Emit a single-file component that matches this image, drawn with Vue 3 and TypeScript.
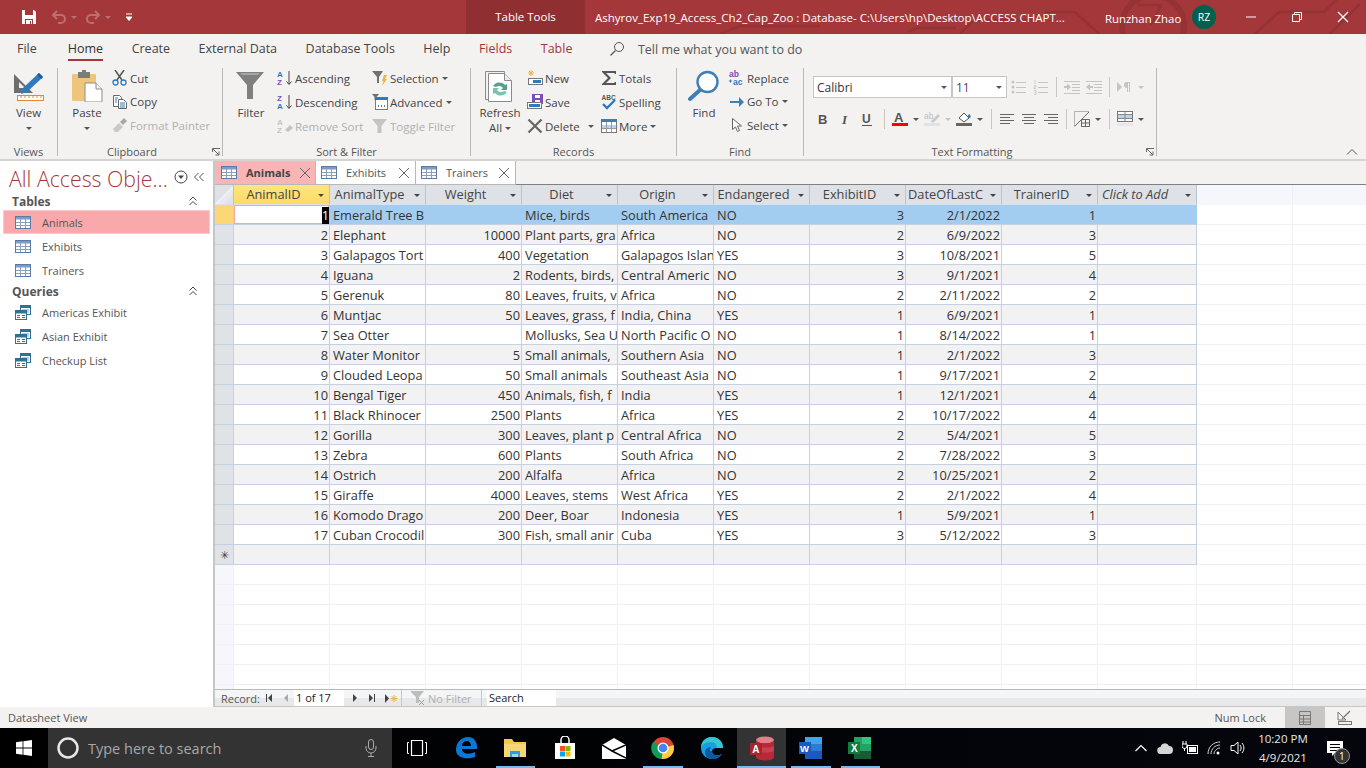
<template>
  <div class="app">
    <!-- icon sprite -->
    <svg class="sprite" width="0" height="0">
      <defs>
        <symbol id="save" viewBox="0 0 16 16"><path d="M1 1h12l2 2v12H1z" fill="#fff"/><path d="M4 1h8v5H4z" fill="#a4373a"/><path d="M4 10h8v5H4z" fill="#a4373a"/><path d="M5 11h6v4H5z" fill="#fff"/><path d="M9 12h1v3H9z" fill="#a4373a"/></symbol>
        <symbol id="undo" viewBox="0 0 16 16"><path d="M6 2 2 6l4 4M2 6h8a4 4 0 0 1 0 8H7" fill="none" stroke="#bd6e70" stroke-width="2"/></symbol>
        <symbol id="redo" viewBox="0 0 16 16"><path d="M10 2l4 4-4 4M14 6H6a4 4 0 0 0 0 8h3" fill="none" stroke="#bd6e70" stroke-width="2"/></symbol>
        <symbol id="view" viewBox="0 0 32 32"><path d="M1 4v19h19z" fill="#6e6e6e"/><path d="M6 12v6h6z" fill="#f3f2f1"/><path d="M10 18 26 3l4 4-16 15-6 2z" fill="#2f7abf"/><path d="M26 3l4 4-2 2-4-4z" fill="#1d5d97"/><rect x="4.500" y="25.500" width="26" height="5" fill="#fff" stroke="#e8872c"/><path d="M8 26v2M12 26v2M16 26v2M20 26v2M24 26v2M28 26v2" stroke="#e8872c"/></symbol>
        <symbol id="paste" viewBox="0 0 32 32"><rect x="1" y="4" width="24" height="27" rx="1" fill="#efc57c"/><rect x="7" y="2" width="12" height="6" fill="#7b7b7b"/><rect x="11" y="0" width="4" height="3" fill="#7b7b7b"/><path d="M14 13h11l6 6v13H14z" fill="#fff" stroke="#8c8c8c"/><path d="M25 13v6h6" fill="#f0f0f0" stroke="#8c8c8c"/></symbol>
        <symbol id="cut" viewBox="0 0 16 16"><path d="M3 0l7 10M12 0 5 10" stroke="#555" stroke-width="1.500" fill="none"/><circle cx="3.500" cy="12.500" r="2.500" fill="none" stroke="#2f7abf" stroke-width="1.300"/><circle cx="11.500" cy="12.500" r="2.500" fill="none" stroke="#2f7abf" stroke-width="1.300"/></symbol>
        <symbol id="copy" viewBox="0 0 16 16"><path d="M1.500 1.500h6l2 2v9h-8z" fill="#fff" stroke="#666"/><path d="M6.500 5.500h5l3 3v6h-8z" fill="#fff" stroke="#666"/><path d="M8 9h5M8 11h5M8 13h5M3 4h3M3 6h2M3 8h2" stroke="#2f7abf"/></symbol>
        <symbol id="painter" viewBox="0 0 16 16"><path d="M1 12l6-6 4 4-5 5H3z" fill="#c9c9c9"/><path d="M8 5l4-4 3 3-4 4z" fill="#a8a8a8"/></symbol>
        <symbol id="funnel" viewBox="0 0 32 32"><path d="M1 2h28L18 15v14h-6V15z" fill="#7f7f7f"/><path d="M5 3h20l-2 2H7z" fill="#a6a6a6"/></symbol>
        <symbol id="asc" viewBox="0 0 16 16"><text x="0" y="7" font-size="8" font-weight="700" fill="#2f7abf" font-family="Liberation Sans">A</text><text x="0" y="15" font-size="8" font-weight="700" fill="#7d4fb5" font-family="Liberation Sans">Z</text><path d="M12 1v13M9.500 11.500 12 14.500l2.500-3" stroke="#444" fill="none"/></symbol>
        <symbol id="desc" viewBox="0 0 16 16"><text x="0" y="7" font-size="8" font-weight="700" fill="#7d4fb5" font-family="Liberation Sans">Z</text><text x="0" y="15" font-size="8" font-weight="700" fill="#2f7abf" font-family="Liberation Sans">A</text><path d="M12 1v13M9.500 11.500 12 14.500l2.500-3" stroke="#444" fill="none"/></symbol>
        <symbol id="nosort" viewBox="0 0 16 16"><text x="0" y="7" font-size="8" font-weight="700" fill="#c4c4c4" font-family="Liberation Sans">A</text><text x="0" y="15" font-size="8" font-weight="700" fill="#c4c4c4" font-family="Liberation Sans">Z</text><path d="M8 12l5-5 3 3-5 4z" fill="#c4c4c4"/></symbol>
        <symbol id="selection" viewBox="0 0 16 16"><path d="M0 1h11L7 7v6H5V7z" fill="#707070"/><path d="M12 5h3l-2 4h2l-5 7 1.500-5H10z" fill="#f0b33c"/></symbol>
        <symbol id="advanced" viewBox="0 0 16 16"><path d="M0 0h7L4.500 3v3h-2V3z" fill="#707070"/><rect x="3.500" y="3.500" width="12" height="12" fill="#fff" stroke="#7b7b7b"/><rect x="3" y="3" width="13" height="3" fill="#2f7abf"/><path d="M6 12h1M9 12h1M12 12h1" stroke="#444" stroke-width="1.500"/></symbol>
        <symbol id="togglef" viewBox="0 0 16 16"><path d="M0 1h15L9.500 8v7h-4V8z" fill="#c4c4c4"/></symbol>
        <symbol id="refresh" viewBox="0 0 32 32"><path d="M1.500 1.500h19v28h-19z" fill="#f3f2f1" stroke="#8a8a8a"/><path d="M4.500 3.500h16l7 7v21h-23z" fill="#fff" stroke="#8a8a8a"/><path d="M20.500 3.500v7h7" fill="#ececec" stroke="#8a8a8a"/><path d="M9 16a7 6 0 0 1 12-1l2-1v6h-6l2-2a4.500 4 0 0 0-7-1z" fill="#58a08a"/><path d="M23 22a7 6 0 0 1-12 1l-2 1v-6h6l-2 2a4.500 4 0 0 0 7 1z" fill="#7dc2ae"/></symbol>
        <symbol id="new" viewBox="0 0 16 16"><path d="M4 0v6M1 3h6M2 1l4 4M6 1 2 5" stroke="#e9b44c"/><rect x="1.500" y="8.500" width="14" height="6" fill="#fff" stroke="#777"/><rect x="6" y="10" width="8" height="3" fill="#2f7abf"/></symbol>
        <symbol id="saverec" viewBox="0 0 16 16"><rect x="5" y="0" width="11" height="10" fill="#7d4fb5"/><rect x="8" y="1" width="5" height="3" fill="#fff"/><rect x="8" y="6" width="5" height="4" fill="#fff"/><rect x="0.500" y="8.500" width="14" height="6" fill="#fff" stroke="#777"/><rect x="2" y="10" width="11" height="3" fill="#2f7abf"/></symbol>
        <symbol id="delete" viewBox="0 0 16 16"><path d="M1.500 1.500l13 13M14.500 1.500l-13 13" stroke="#666" stroke-width="2.200"/></symbol>
        <symbol id="totals" viewBox="0 0 16 16"><path d="M1 1h14v3h-1l-1-1H5l5 5-5 5h8l1-1h1v3H1v-1l6-6-6-6z" fill="#555"/></symbol>
        <symbol id="spelling" viewBox="0 0 16 16"><text x="0.500" y="6" font-size="6.500" font-weight="700" fill="#555" font-family="Liberation Sans">ABC</text><path d="M2 10l4 4 8-8" stroke="#2f7abf" stroke-width="2.400" fill="none"/></symbol>
        <symbol id="more" viewBox="0 0 16 16"><rect x="0.500" y="1.500" width="15" height="13" fill="#fff" stroke="#777"/><rect x="0" y="1" width="16" height="3" fill="#4a7ba8"/><rect x="1" y="7" width="14" height="3" fill="#b8d3ea"/><path d="M5.500 4v10M10.500 4v10M1 10.500h14" stroke="#999"/></symbol>
        <symbol id="find" viewBox="0 0 32 32"><circle cx="19.500" cy="12" r="10" fill="#fff" stroke="#3f7fb5" stroke-width="2.400"/><path d="M12 20 2 29" stroke="#3f7fb5" stroke-width="4" stroke-linecap="round"/></symbol>
        <symbol id="replace" viewBox="0 0 16 16"><text x="0" y="7" font-size="8.500" font-weight="700" fill="#7d4fb5" font-family="Liberation Sans">ab</text><text x="4" y="15" font-size="8.500" font-weight="700" fill="#2f7abf" font-family="Liberation Sans">ac</text><path d="M0 11h3M1.500 9.500v3" stroke="#2f7abf"/></symbol>
        <symbol id="goto" viewBox="0 0 16 16"><path d="M1 7h9V3l5 5-5 5V9H1z" fill="#3f7fb5"/></symbol>
        <symbol id="select" viewBox="0 0 16 16"><path d="M3.500 1.500v11l3-2.500 2 4.500 2-1-2-4.500h4z" fill="#fff" stroke="#666"/></symbol>
        <symbol id="bold" viewBox="0 0 16 16"><text x="3" y="13" font-size="13" font-weight="700" fill="#555" font-family="Liberation Sans">B</text></symbol>
        <symbol id="italic" viewBox="0 0 16 16"><text x="5" y="13" font-size="13" font-style="italic" font-weight="700" fill="#555" font-family="Liberation Serif">I</text></symbol>
        <symbol id="under" viewBox="0 0 16 16"><text x="3" y="12" font-size="12" font-weight="700" fill="#555" font-family="Liberation Sans">U</text><path d="M3 14.500h10" stroke="#555"/></symbol>
        <symbol id="fcolor" viewBox="0 0 16 16"><text x="2" y="11" font-size="13" font-weight="700" fill="#555" font-family="Liberation Sans">A</text><rect x="0" y="12" width="16" height="3" fill="#f00"/></symbol>
        <symbol id="hilite" viewBox="0 0 16 16"><text x="0" y="8" font-size="8.500" fill="#bdbdbd" font-family="Liberation Sans">ab</text><path d="M7 10l7-7 2 2-7 7z" fill="#c9c9c9"/><rect x="0" y="12" width="16" height="3" fill="#e4e1e8"/></symbol>
        <symbol id="fill" viewBox="0 0 16 16"><path d="M3 7l5-5 5 5-5 4z" fill="#fff" stroke="#555"/><path d="M13 3c2 1 2 3 1 4l-3-1z" fill="#2f7abf"/><rect x="0" y="12" width="16" height="3" fill="#666"/></symbol>
        <symbol id="left" viewBox="0 0 16 16"><path d="M1 3.500h14M1 6.500h10M1 9.500h14M1 12.500h10" stroke="#666"/></symbol>
        <symbol id="center" viewBox="0 0 16 16"><path d="M1 3.500h14M3 6.500h10M1 9.500h14M3 12.500h10" stroke="#666"/></symbol>
        <symbol id="right" viewBox="0 0 16 16"><path d="M1 3.500h14M5 6.500h10M1 9.500h14M5 12.500h10" stroke="#666"/></symbol>
        <symbol id="gridl" viewBox="0 0 16 16"><path d="M.5 15.500V.5h15" fill="none" stroke="#777" stroke-dasharray="1 1"/><path d="M1 15 15 1" stroke="#666"/><path d="M7.500 15.500v-7h8v7zM11.500 8.500v7M7.500 12h8" fill="none" stroke="#666"/></symbol>
        <symbol id="altrow" viewBox="0 0 16 16"><rect x="0.500" y="0.500" width="15" height="10" fill="#fff" stroke="#777"/><rect x="1" y="4" width="14" height="3" fill="#b8d3ea"/><path d="M8 1v9M1 3.500h14M1 7.500h14" stroke="#888"/><rect x="0" y="12" width="16" height="3" fill="#e8e8ec"/></symbol>
        <symbol id="bullets" viewBox="0 0 16 16"><path d="M5 3.500h10M5 8.500h10M5 13.500h10" stroke="#c4c4c4"/><circle cx="2" cy="3" r="1.500" fill="#c4c4c4"/><circle cx="2" cy="8" r="1.500" fill="#c4c4c4"/><circle cx="2" cy="13" r="1.500" fill="#c4c4c4"/></symbol>
        <symbol id="numbers" viewBox="0 0 16 16"><path d="M5 3.500h10M5 8.500h10M5 13.500h10" stroke="#c4c4c4"/><path d="M2 1v4M1 6.500h2v1.500H1v1.500h2M1 11.500h2v4H1M1.500 13.500H3" stroke="#c4c4c4" fill="none" stroke-width=".8"/></symbol>
        <symbol id="indent" viewBox="0 0 16 16"><path d="M0 2.500h16M8 5.500h8M8 8.500h8M8 11.500h8M0 14.500h16" stroke="#c4c4c4"/><path d="M0 7h3V4.500L7 8l-4 3.500V9H0z" fill="#c4c4c4"/></symbol>
        <symbol id="outdent" viewBox="0 0 16 16"><path d="M0 2.500h16M8 5.500h8M8 8.500h8M8 11.500h8M0 14.500h16" stroke="#c4c4c4"/><path d="M7 7H4V4.500L0 8l4 3.500V9h3z" fill="#c4c4c4"/></symbol>
        <symbol id="rtl" viewBox="0 0 16 16"><path d="M0 3l5 5-5 5z" fill="#c4c4c4"/><path d="M10 3a2.500 2.500 0 0 0 0 6v4h1V4h1v9h1V3z" fill="#c4c4c4"/></symbol>
        <symbol id="launcher" viewBox="0 0 8 8"><path d="M.5 4V.5H8M1 1l6 6M7 3.500V7H3.500" stroke="#666" fill="none"/></symbol>
        <symbol id="tbl" viewBox="0 0 16 13"><rect x="0.500" y="0.500" width="15" height="12" fill="#fff" stroke="#5b7ba4"/><rect x="1" y="1" width="14" height="2.500" fill="#7f9cc4"/><path d="M1 6.500h14M1 9.500h14M5.500 3v9M10.500 3v9" stroke="#8aa0bf"/></symbol>
        <symbol id="qry" viewBox="0 0 16 15"><rect x="5.500" y="0.500" width="10" height="9" fill="#fff" stroke="#31708f"/><rect x="6" y="1" width="9" height="2" fill="#31708f"/><path d="M7 5h7M7 7h7" stroke="#7f9cc4"/><rect x="0.500" y="5.500" width="11" height="9" fill="#fff" stroke="#31708f"/><rect x="1" y="6" width="10" height="2.500" fill="#31708f"/><path d="M2 10.500h3M7 10.500h3M2 12.500h3M7 12.500h3" stroke="#31708f"/></symbol>
      </defs>
    </svg>

    <!-- title bar -->
    <header class="title">
      <svg class="circuit" width="1366" height="34" viewBox="0 0 1366 34">
        <g fill="none" stroke="#943236" stroke-width="2.500">
          <circle cx="1153" cy="26" r="31" stroke-width="6"/>
          <path d="M1137 5h24l-10 20M1045 12h30l24 22M960 34l14-14h60M1255 34l24-22h45l14-14M1330 34l30-30" />
          <path d="M908 32l8-4h40M720 34l20-8h80" />
        </g>
      </svg>
      <div class="qat">
        <svg width="16" height="16"><use href="#save"/></svg>
        <svg class="q-undo" width="16" height="16"><use href="#undo"/></svg>
        <i class="qcaret"></i>
        <svg class="q-redo" width="16" height="16"><use href="#redo"/></svg>
        <i class="qcaret"></i>
        <svg class="qmenu" width="8" height="8" viewBox="0 0 8 8"><path d="M1 1h6M1 4h6L4 7.500z" stroke="#fff" fill="#fff"/></svg>
      </div>
      <div class="tools">Table Tools</div>
      <div class="doc-title">Ashyrov_Exp19_Access_Ch2_Cap_Zoo : Database- C:\Users\hp\Desktop\ACCESS CHAPT...</div>
      <div class="user">Runzhan Zhao</div>
      <div class="avatar">RZ</div>
      <svg class="winbtn first" width="46" height="34" viewBox="0 0 46 34"><path d="M18 17h10" stroke="#fff"/></svg>
      <svg class="winbtn" width="46" height="34" viewBox="0 0 46 34"><path d="M18.500 14.500h7v7h-7zM20.500 14.500v-2h7v7h-2" fill="none" stroke="#fff"/></svg>
      <svg class="winbtn" width="46" height="34" viewBox="0 0 46 34"><path d="M18 12l10 10M28 12 18 22" stroke="#fff" stroke-width="1.200"/></svg>
    </header>

    <!-- ribbon tabs -->
    <nav class="tabs">
      <span v-for="t in ribbonTabs" :key="t.label" class="tab" :class="t.cls">{{ t.label }}</span>
      <svg class="tell-i" width="16" height="16" viewBox="0 0 16 16"><circle cx="10" cy="6" r="4.500" fill="none" stroke="#555"/><path d="M6.500 9.500 1.500 14.500" stroke="#555" stroke-width="1.300"/></svg>
      <span class="tell">Tell me what you want to do</span>
    </nav>

    <!-- ribbon -->
    <section class="ribbon">
      <div class="group g-views">
        <div class="gbody">
          <div class="large view-btn">
            <svg width="32" height="32"><use href="#view"/></svg>
            <span>View</span>
            <i class="caret"></i>
          </div>
        </div>
        <div class="glabel">Views</div>
      </div>

      <div class="group g-clip">
        <div class="gbody">
          <div class="large paste-btn">
            <svg width="32" height="32"><use href="#paste"/></svg>
            <span>Paste</span>
            <i class="caret"></i>
          </div>
          <div class="col tight">
            <div v-for="b in clipboard" :key="b.label" class="sm" :class="{ off: b.off }">
              <svg width="16" height="16"><use :href="'#' + b.icon"/></svg>{{ b.label }}
            </div>
          </div>
        </div>
        <div class="glabel">Clipboard<svg class="launch" width="8" height="8"><use href="#launcher"/></svg></div>
      </div>

      <div class="group g-sort">
        <div class="gbody">
          <div class="large filter-btn">
            <svg width="32" height="32"><use href="#funnel"/></svg>
            <span>Filter</span>
          </div>
          <div class="col sort-a">
            <div v-for="b in sortA" :key="b.label" class="sm" :class="{ off: b.off }">
              <svg width="16" height="16"><use :href="'#' + b.icon"/></svg>{{ b.label }}
            </div>
          </div>
          <div class="col">
            <div v-for="b in sortB" :key="b.label" class="sm" :class="{ off: b.off }">
              <svg width="16" height="16"><use :href="'#' + b.icon"/></svg>{{ b.label }}<i v-if="b.caret" class="caret"></i>
            </div>
          </div>
        </div>
        <div class="glabel">Sort &amp; Filter</div>
      </div>

      <div class="group g-rec">
        <div class="gbody">
          <div class="large refresh-btn">
            <svg width="32" height="32"><use href="#refresh"/></svg>
            <span>Refresh</span>
            <span class="all">All<i class="caret"></i></span>
          </div>
          <div class="col rec-a">
            <div v-for="b in recA" :key="b.label" class="sm">
              <svg width="16" height="16"><use :href="'#' + b.icon"/></svg>{{ b.label }}<i v-if="b.caret" class="caret far"></i>
            </div>
          </div>
          <div class="col">
            <div v-for="b in recB" :key="b.label" class="sm">
              <svg width="16" height="16"><use :href="'#' + b.icon"/></svg>{{ b.label }}<i v-if="b.caret" class="caret"></i>
            </div>
          </div>
        </div>
        <div class="glabel">Records</div>
      </div>

      <div class="group g-find">
        <div class="gbody">
          <div class="large find-btn">
            <svg width="32" height="32"><use href="#find"/></svg>
            <span>Find</span>
          </div>
          <div class="col tight">
            <div v-for="b in findBtns" :key="b.label" class="sm">
              <svg width="16" height="16"><use :href="'#' + b.icon"/></svg>{{ b.label }}<i v-if="b.caret" class="caret"></i>
            </div>
          </div>
        </div>
        <div class="glabel">Find</div>
      </div>

      <div class="group g-text">
        <div class="gbody stack">
          <div class="fmt-row">
            <div class="combo font">Calibri<i class="caret"></i></div>
            <div class="combo size"><span class="size-val">11</span><i class="caret"></i></div>
            <template v-for="(it, n) in fmtTop" :key="n">
              <i v-if="it.kind === 'sep'" class="vsep"></i>
              <i v-else-if="it.kind === 'caret'" class="fcaret"><i class="caret dim"></i></i>
              <svg v-else class="fi" width="16" height="16"><use :href="'#' + it.kind"/></svg>
            </template>
          </div>
          <div class="fmt-row second">
            <template v-for="(it, n) in fmtBottom" :key="n">
              <i v-if="it.kind === 'sep'" class="vsep" :class="it.cls"></i>
              <i v-else-if="it.kind === 'caret'" class="fcaret"><i class="caret" :class="it.cls"></i></i>
              <svg v-else class="fi" width="16" height="16"><use :href="'#' + it.kind"/></svg>
            </template>
          </div>
        </div>
        <div class="glabel">Text Formatting<svg class="launch" width="8" height="8"><use href="#launcher"/></svg></div>
      </div>

      <svg class="collapse" width="12" height="8" viewBox="0 0 12 8"><path d="M1 6.500 6 1.500l5 5" fill="none" stroke="#555"/></svg>
    </section>

    <!-- main -->
    <main class="main">
      <aside class="navpane">
        <div class="nav-head">
          <span class="nav-title">All Access Obje...</span>
          <svg width="14" height="14" viewBox="0 0 14 14"><circle cx="7" cy="7" r="6" fill="none" stroke="#444"/><path d="M4 5.500h6L7 9z" fill="#444"/></svg>
          <svg width="12" height="10" viewBox="0 0 12 10"><path d="M5.500 1 1.500 5l4 4M10.500 1l-4 4 4 4" fill="none" stroke="#555"/></svg>
        </div>
        <template v-for="sec in navSections" :key="sec.title">
          <div class="nav-sec">
            {{ sec.title }}
            <svg width="10" height="10" viewBox="0 0 10 10"><path d="M1.500 4.500 5 1l3.500 3.500M1.500 9 5 5.500 8.500 9" fill="none" stroke="#444"/></svg>
          </div>
          <div v-for="item in sec.items" :key="item" class="nav-item" :class="{ active: item === 'Animals' }">
            <svg width="16" height="15"><use :href="'#' + sec.icon"/></svg>
            <span>{{ item }}</span>
          </div>
        </template>
      </aside>

      <div class="content">
        <div class="doc-tabs">
          <div v-for="d in docTabs" :key="d" class="doc-tab" :class="{ active: d === 'Animals' }">
            <svg width="16" height="13"><use href="#tbl"/></svg>
            <span>{{ d }}</span>
            <svg class="doc-x" width="12" height="12" viewBox="0 0 12 12"><path d="M1 1l10 10M11 1 1 11" stroke="#666"/></svg>
          </div>
        </div>

        <div class="sheet">
          <table>
            <colgroup>
              <col class="c-sel"/>
              <col v-for="n in 9" :key="n" class="c-std"/>
              <col class="c-add"/>
              <col class="c-std"/>
              <col class="c-std"/>
            </colgroup>
            <thead>
              <tr>
                <th class="sel corner"></th>
                <th v-for="h in headers" :key="h" :class="{ hot: h === 'AnimalID' }">
                  <span class="th-text">{{ h }}</span><i class="hcaret"></i>
                </th>
                <th class="add"><span>Click to Add</span><i class="hcaret"></i></th>
                <th class="blank"></th>
                <th class="blank"></th>
              </tr>
            </thead>
            <tbody>
              <tr v-for="(r, i) in animals" :key="r[0]" :class="{ cur: i === 0, alt: i % 2 === 1 }">
                <td class="sel"></td>
                <td class="num id"><span :class="{ mark: i === 0 }">{{ r[0] }}</span></td>
                <td>{{ r[1] }}</td>
                <td class="num">{{ r[2] }}</td>
                <td>{{ r[3] }}</td>
                <td>{{ r[4] }}</td>
                <td>{{ r[5] }}</td>
                <td class="num">{{ r[6] }}</td>
                <td class="num">{{ r[7] }}</td>
                <td class="num">{{ r[8] }}</td>
                <td></td>
                <td class="blank"></td>
                <td class="blank"></td>
              </tr>
              <tr class="alt">
                <td class="sel star">✳</td>
                <td v-for="n in 10" :key="n"></td>
                <td class="blank"></td>
                <td class="blank"></td>
              </tr>
              <tr v-for="n in 7" :key="'e' + n" class="empty">
                <td v-for="c in 13" :key="c" class="blank" :class="{ esel: c === 1 }"></td>
              </tr>
            </tbody>
          </table>
        </div>

        <div class="recbar">
          <span class="rec-label">Record:</span>
          <svg class="rb first" width="8" height="8" viewBox="0 0 8 8"><path d="M1 0v8h1V0zM7 0 3 4l4 4z" fill="#444"/></svg>
          <svg class="rb prev" width="8" height="8" viewBox="0 0 8 8"><path d="M6 0 2 4l4 4z" fill="#aaa"/></svg>
          <div class="rec-input">1 of 17</div>
          <svg class="rb next" width="8" height="8" viewBox="0 0 8 8"><path d="M2 0l4 4-4 4z" fill="#444"/></svg>
          <svg class="rb last" width="8" height="8" viewBox="0 0 8 8"><path d="M1 0l4 4-4 4zM6 0v8h1V0z" fill="#444"/></svg>
          <svg class="rb newr" width="13" height="9" viewBox="0 0 13 9"><path d="M0 0l4 4.500L0 9z" fill="#444"/><path d="M9 1v7M5.500 4.500h7M6.500 2l5 5M11.500 2l-5 5" stroke="#e9b44c"/></svg>
          <i class="rec-sep"></i>
          <svg class="rb nof" width="16" height="16" viewBox="0 0 16 16"><path d="M0 1h14L9 7v6H6V7z" fill="#bdbdbd"/><path d="M9 10l5 5M14 10l-5 5" stroke="#999"/></svg>
          <span class="nofilter">No Filter</span>
          <i class="rec-sep"></i>
          <div class="rec-search">Search</div>
        </div>
      </div>
    </main>

    <!-- status bar -->
    <footer class="status">
      <span>Datasheet View</span>
      <span class="numlock">Num Lock</span>
      <div class="sview on">
        <svg width="16" height="16" viewBox="0 0 16 16"><path d="M2.500 1.500h11v13h-11zM2.500 5.500h11M2.500 9h11M2.500 12h11M6.500 5.500v9" fill="none" stroke="#777"/></svg>
      </div>
      <div class="sview">
        <svg width="16" height="16" viewBox="0 0 16 16"><path d="M1 2v8h8z" fill="none" stroke="#777"/><path d="M5 9l8-8" stroke="#777" stroke-width="1.300"/><rect x="1.500" y="11.500" width="13" height="3" fill="none" stroke="#777"/></svg>
      </div>
    </footer>

    <!-- taskbar -->
    <div class="taskbar">
      <div class="start">
        <svg width="16" height="16" viewBox="0 0 16 16"><path d="M0 2.200 6.600 1.300v6.300H0zM7.400 1.200 16 0v7.600H7.400zM0 8.400h6.600v6.300L0 13.800zM7.400 8.400H16V16l-8.600-1.200z" fill="#fff"/></svg>
      </div>
      <div class="search">
        <svg width="24" height="24" viewBox="0 0 24 24"><circle cx="12" cy="12" r="9.500" fill="none" stroke="#e8e8e8" stroke-width="2.500"/></svg>
        <span>Type here to search</span>
        <svg class="mic" width="12" height="18" viewBox="0 0 12 18"><rect x="3.500" y="0.500" width="5" height="10" rx="2.500" fill="none" stroke="#aaa"/><path d="M1 7v2a5 5 0 0 0 10 0V7M6 14v3M3 17.500h6" fill="none" stroke="#aaa"/></svg>
      </div>
      <div class="apps">
        <div class="app-slot">
          <svg width="20" height="18" viewBox="0 0 20 18"><path d="M4.500 1.500h11v15h-11z" fill="none" stroke="#fff" stroke-width="1.200"/><path d="M2 3.500H.5v11H2M18 3.500h1.500v11H18" fill="none" stroke="#fff"/></svg>
        </div>
        <div class="app-slot">
          <svg width="24" height="24" viewBox="0 0 24 24"><path d="M2 14C2 6 8 1 14 1c6 0 9 5 9 10v2H8c0 5 7 6 13 3v5c-8 3-19 1-19-7zm6-4h9c0-3-2-5-4-5-3 0-5 2-5 5z" fill="#0b78d7"/></svg>
        </div>
        <div class="app-slot run">
          <svg width="24" height="22" viewBox="0 0 24 22"><path d="M1 2h8l2 3h12v3H1z" fill="#f3c94a"/><path d="M1 7h22v13H1z" fill="#f7d774"/><path d="M7 20v-6h10v6z" fill="#2f9bd7"/><path d="M9 20v-3h6v3z" fill="#9fd4f0"/></svg>
        </div>
        <div class="app-slot">
          <svg width="24" height="24" viewBox="0 0 24 24"><path d="M2 7h20v16H2z" fill="#fff"/><path d="M8 7V4a4 4 0 0 1 8 0v3" fill="none" stroke="#fff" stroke-width="1.500"/><path d="M7 10h5v5H7z" fill="#f25022"/><path d="M12.500 10h5v5h-5z" fill="#7fba00"/><path d="M7 15.500h5v5H7z" fill="#00a4ef"/><path d="M12.500 15.500h5v5h-5z" fill="#ffb900"/></svg>
        </div>
        <div class="app-slot">
          <svg width="24" height="22" viewBox="0 0 24 22"><path d="M0 8 12 1l12 7v14H0z" fill="#fff"/><path d="M0 8l10 6 14 7M24 8l-14 6" fill="none" stroke="#000" stroke-width="1.500"/></svg>
        </div>
        <div class="app-slot run">
          <svg width="24" height="24" viewBox="0 0 24 24"><circle cx="12" cy="12" r="11" fill="#db4437"/><path d="M12 12 22.500 9a11 11 0 0 1-12 14z" fill="#ffcd40"/><path d="M12 12 10.500 23A11 11 0 0 1 2 6z" fill="#0f9d58"/><circle cx="12" cy="12" r="5.500" fill="#fff"/><circle cx="12" cy="12" r="4.300" fill="#4285f4"/></svg>
        </div>
        <div class="app-slot">
          <svg width="24" height="24" viewBox="0 0 24 24"><path d="M12 1C5 1 1 6 1 12c0 7 6 11 11 11 4 0 7-1 10-5-6 3-10 1-10-3 0-2 2-3 5-3h6C23 5 18 1 12 1z" fill="#1b9de2"/><path d="M1 12C1 6 5 1 12 1c6 0 11 4 11 11h-6c0-3-2-6-6-6-5 0-10 3-10 6z" fill="#37c6d0"/><path d="M12 15c0 4 4 6 10 3-3 4-6 5-10 5-4 0-7-3-7-7 0-3 3-5 6-5-1 1-1 2-1 4z" fill="#0c59a4"/></svg>
        </div>
        <div class="app-slot run open">
          <svg width="26" height="26" viewBox="0 0 26 26"><ellipse cx="16" cy="5" rx="9" ry="3.500" fill="#e2808a"/><path d="M7 5v17c0 2 4 3.500 9 3.500s9-1.500 9-3.500V5c0 2-4 3.500-9 3.500S7 7 7 5z" fill="#b7283a"/><path d="M7 11c3 2 15 2 18 0v5c-3 2-15 2-18 0z" fill="#c9404f"/><rect x="1" y="8" width="12" height="12" fill="#a4262c"/><text x="3.300" y="17.500" font-size="10" font-weight="700" fill="#fff" font-family="Liberation Sans">A</text></svg>
        </div>
        <div class="app-slot run">
          <svg width="26" height="26" viewBox="0 0 26 26"><path d="M7 2h17v22H7z" fill="#2b7cd3"/><path d="M7 2h17v7H7z" fill="#41a5ee"/><path d="M7 16h17v8H7z" fill="#185abd"/><rect x="1" y="7" width="12" height="12" fill="#185abd"/><text x="2" y="16.500" font-size="9.500" font-weight="700" fill="#fff" font-family="Liberation Sans">W</text></svg>
        </div>
        <div class="app-slot run">
          <svg width="26" height="26" viewBox="0 0 26 26"><path d="M7 2h17v22H7z" fill="#21a366"/><path d="M15 2h9v7h-9z" fill="#33c481"/><path d="M7 16h17v8H7z" fill="#185c37"/><rect x="1" y="7" width="12" height="12" fill="#107c41"/><text x="4" y="16.500" font-size="10" font-weight="700" fill="#fff" font-family="Liberation Sans">X</text></svg>
        </div>
      </div>
      <div class="tray">
        <svg class="t-up" width="12" height="8" viewBox="0 0 12 8"><path d="M.5 7 6 1.500 11.500 7" fill="none" stroke="#fff" stroke-width="1.200"/></svg>
        <svg class="t-cloud" width="16" height="11" viewBox="0 0 16 11"><path d="M4 11a3.500 3.500 0 0 1-.5-7 4.500 4.500 0 0 1 8.500-1 3.800 3.800 0 0 1 0 8z" fill="#d5d5d5"/></svg>
        <svg class="t-power" width="16" height="14" viewBox="0 0 16 14"><rect x="5.500" y="4.500" width="10" height="8" fill="none" stroke="#fff"/><rect x="7" y="6" width="7" height="5" fill="#fff"/><path d="M1 0v3M4 0v3M0 3h5v2a2.500 2.500 0 0 1-5 0zM2.500 7v3" stroke="#fff" fill="none"/></svg>
        <svg class="t-wifi" width="16" height="14" viewBox="0 0 16 14"><path d="M1 13C1 6 6 1 13 1M4 13c0-5 4-9 9-9M7 13c0-3 3-6 6-6" fill="none" stroke="#ccc"/><circle cx="11" cy="12" r="1.500" fill="#fff"/></svg>
        <svg class="t-vol" width="16" height="16" viewBox="0 0 16 16"><path d="M1 5.500h3L8 2v12L4 10.500H1z" fill="none" stroke="#fff"/><path d="M10 5c1.500 2 1.500 4 0 6M12 3c2.500 3 2.500 7 0 10" fill="none" stroke="#fff"/></svg>
        <div class="clock"><span>10:20 PM</span><span>4/9/2021</span></div>
        <div class="notif">
          <svg width="16" height="15" viewBox="0 0 16 15"><path d="M0 0h16v12H8l-3 3v-3H0z" fill="#fff"/><path d="M3 3.500h10M3 6.500h10M3 9.500h7" stroke="#000"/></svg>
          <span class="badge">1</span>
        </div>
      </div>
    </div>
  </div>
</template>

<script setup lang="ts">
interface RibbonBtn {
  label: string
  icon: string
  off?: boolean
  caret?: boolean
}

interface FmtItem {
  kind: string
  cls?: string
}

const ribbonTabs = [
  { label: 'File', cls: 't-file' },
  { label: 'Home', cls: 'active' },
  { label: 'Create', cls: '' },
  { label: 'External Data', cls: '' },
  { label: 'Database Tools', cls: '' },
  { label: 'Help', cls: '' },
  { label: 'Fields', cls: 'ctx' },
  { label: 'Table', cls: 'ctx' }
]

const clipboard: RibbonBtn[] = [
  { label: 'Cut', icon: 'cut' },
  { label: 'Copy', icon: 'copy' },
  { label: 'Format Painter', icon: 'painter', off: true }
]
const sortA: RibbonBtn[] = [
  { label: 'Ascending', icon: 'asc' },
  { label: 'Descending', icon: 'desc' },
  { label: 'Remove Sort', icon: 'nosort', off: true }
]
const sortB: RibbonBtn[] = [
  { label: 'Selection', icon: 'selection', caret: true },
  { label: 'Advanced', icon: 'advanced', caret: true },
  { label: 'Toggle Filter', icon: 'togglef', off: true }
]
const recA: RibbonBtn[] = [
  { label: 'New', icon: 'new' },
  { label: 'Save', icon: 'saverec' },
  { label: 'Delete', icon: 'delete', caret: true }
]
const recB: RibbonBtn[] = [
  { label: 'Totals', icon: 'totals' },
  { label: 'Spelling', icon: 'spelling' },
  { label: 'More', icon: 'more', caret: true }
]
const findBtns: RibbonBtn[] = [
  { label: 'Replace', icon: 'replace' },
  { label: 'Go To', icon: 'goto', caret: true },
  { label: 'Select', icon: 'select', caret: true }
]

const fmtTop: FmtItem[] = [
  { kind: 'bullets' }, { kind: 'numbers' }, { kind: 'sep' },
  { kind: 'indent' }, { kind: 'outdent' }, { kind: 'sep' },
  { kind: 'rtl' }, { kind: 'caret' }
]
const fmtBottom: FmtItem[] = [
  { kind: 'bold' }, { kind: 'italic' }, { kind: 'under' }, { kind: 'sep', cls: 'wide' },
  { kind: 'fcolor' }, { kind: 'caret' }, { kind: 'hilite' }, { kind: 'caret', cls: 'dim' },
  { kind: 'fill' }, { kind: 'caret' }, { kind: 'sep', cls: 'wide' },
  { kind: 'left' }, { kind: 'center' }, { kind: 'right' }, { kind: 'sep' },
  { kind: 'gridl' }, { kind: 'caret' }, { kind: 'sep', cls: 'wide' },
  { kind: 'altrow' }, { kind: 'caret' }
]

const navSections = [
  { title: 'Tables', icon: 'tbl', items: ['Animals', 'Exhibits', 'Trainers'] },
  { title: 'Queries', icon: 'qry', items: ['Americas Exhibit', 'Asian Exhibit', 'Checkup List'] }
]

const docTabs = ['Animals', 'Exhibits', 'Trainers']

const headers = ['AnimalID', 'AnimalType', 'Weight', 'Diet', 'Origin', 'Endangered', 'ExhibitID', 'DateOfLastC', 'TrainerID']

const animals: string[][] = [
  ['1', 'Emerald Tree B', '', 'Mice, birds', 'South America', 'NO', '3', '2/1/2022', '1'],
  ['2', 'Elephant', '10000', 'Plant parts, gra', 'Africa', 'NO', '2', '6/9/2022', '3'],
  ['3', 'Galapagos Tort', '400', 'Vegetation', 'Galapagos Islan', 'YES', '3', '10/8/2021', '5'],
  ['4', 'Iguana', '2', 'Rodents, birds,', 'Central Americ', 'NO', '3', '9/1/2021', '4'],
  ['5', 'Gerenuk', '80', 'Leaves, fruits, v', 'Africa', 'NO', '2', '2/11/2022', '2'],
  ['6', 'Muntjac', '50', 'Leaves, grass, f', 'India, China', 'YES', '1', '6/9/2021', '1'],
  ['7', 'Sea Otter', '', 'Mollusks, Sea U', 'North Pacific O', 'NO', '1', '8/14/2022', '1'],
  ['8', 'Water Monitor', '5', 'Small animals,', 'Southern Asia', 'NO', '1', '2/1/2022', '3'],
  ['9', 'Clouded Leopa', '50', 'Small animals', 'Southeast Asia', 'NO', '1', '9/17/2021', '2'],
  ['10', 'Bengal Tiger', '450', 'Animals, fish, f', 'India', 'YES', '1', '12/1/2021', '4'],
  ['11', 'Black Rhinocer', '2500', 'Plants', 'Africa', 'YES', '2', '10/17/2022', '4'],
  ['12', 'Gorilla', '300', 'Leaves, plant p', 'Central Africa', 'NO', '2', '5/4/2021', '5'],
  ['13', 'Zebra', '600', 'Plants', 'South Africa', 'NO', '2', '7/28/2022', '3'],
  ['14', 'Ostrich', '200', 'Alfalfa', 'Africa', 'NO', '2', '10/25/2021', '2'],
  ['15', 'Giraffe', '4000', 'Leaves, stems', 'West Africa', 'YES', '2', '2/1/2022', '4'],
  ['16', 'Komodo Drago', '200', 'Deer, Boar', 'Indonesia', 'YES', '1', '5/9/2021', '1'],
  ['17', 'Cuban Crocodil', '300', 'Fish, small anir', 'Cuba', 'YES', '3', '5/12/2022', '3']
]
</script>

<style>
html, body { margin: 0; background: #fff; overflow: hidden; }
</style>

<style scoped>
.app {
  width: 1366px;
  height: 768px;
  display: flex;
  flex-direction: column;
  overflow: hidden;
  font-family: "Open Sans", "Noto Sans", sans-serif;
  font-size: 11.5px;
  color: #444;
  background: #f3f2f1;
}
.sprite { position: absolute; }
svg { flex: none; display: block; }

/* title bar */
.title {
  position: relative;
  height: 34px;
  flex: none;
  display: flex;
  align-items: center;
  background: #a4373a;
  color: #fff;
}
.circuit { position: absolute; left: 0; top: 0; }
.qat {
  position: relative;
  width: 466px;
  flex: none;
  display: flex;
  align-items: center;
  padding-left: 21px;
  box-sizing: border-box;
}
.q-undo { margin-left: 14px; }
.q-redo { margin-left: 8px; }
.qcaret {
  margin-left: 4px;
  width: 0;
  height: 0;
  border-left: 3px solid transparent;
  border-right: 3px solid transparent;
  border-top: 3px solid #bd6e70;
}
.qmenu { margin-left: 14px; }
.tools {
  position: relative;
  width: 119px;
  height: 34px;
  line-height: 33px;
  text-align: center;
  background: #8f2f32;
  font-size: 11.5px;
  flex: none;
}
.doc-title { position: relative; width: 500px; flex: none; margin-left: 10px; margin-right: 10px; font-size: 11.5px; white-space: nowrap; }
.user { position: relative; width: 87px; flex: none; font-size: 11.4px; white-space: nowrap; margin-top: 2px; }
.avatar {
  position: relative;
  width: 24px;
  height: 24px;
  flex: none;
  line-height: 24px;
  border-radius: 50%;
  background: #00604d;
  text-align: center;
  font-size: 10.5px;
}
.winbtn { position: relative; }
.winbtn.first { margin-left: 12px; }

/* ribbon tabs */
.tabs {
  height: 30px;
  flex: none;
  display: flex;
  align-items: center;
  font-size: 12.5px;
  color: #444;
  padding-left: 17px;
  box-sizing: border-box;
}
.tab { margin-right: 28.500px; white-space: nowrap; line-height: 30px; position: relative; }
.tab.t-file { margin-right: 31px; }
.tab.active { color: #333; font-weight: 500; }
.tab.active::after {
  content: "";
  position: absolute;
  left: 0;
  right: 0;
  bottom: 3px;
  height: 2px;
  background: #a4373a;
}
.tab.ctx { color: #a4373a; }
.tell-i { margin-left: 8px; }
.tell { margin-left: 13px; white-space: nowrap; color: #555; }

/* ribbon */
.ribbon {
  position: relative;
  height: 97px;
  flex: none;
  display: flex;
  padding-top: 4px;
  box-sizing: border-box;
  border-bottom: 2px solid #d4d4d4;
}
.group {
  height: 88px;
  flex: none;
  display: flex;
  flex-direction: column;
  border-right: 1px solid #b8b8b8;
  box-sizing: border-box;
}
.g-views { width: 58px; }
.g-clip { width: 165px; }
.g-sort { width: 248px; }
.g-rec { width: 206px; }
.g-find { width: 127px; }
.g-text { width: 353px; }
.gbody { height: 76px; display: flex; flex: none; }
.gbody.stack { flex-direction: column; padding-left: 8px; padding-top: 8px; box-sizing: border-box; }
.glabel {
  position: relative;
  height: 12px;
  line-height: 16px;
  text-align: center;
  color: #555;
  font-size: 11px;
}
.g-clip .glabel, .g-text .glabel { padding-right: 16px; }
.launch { position: absolute; right: 2px; top: 4px; }
.large {
  display: flex;
  flex-direction: column;
  align-items: center;
  flex: none;
  line-height: 16px;
  color: #444;
}
.large svg { margin-top: 2px; margin-bottom: 3px; }
.large .caret { margin-top: 6px; margin-left: 0; }
.view-btn { width: 57px; }
.paste-btn { width: 50px; }
.filter-btn { width: 52px; }
.refresh-btn { width: 54px; }
.refresh-btn .all { margin-top: -1px; }
.refresh-btn .caret { margin-left: 3px; vertical-align: middle; margin-top: 0; display: inline-block; }
.find-btn { width: 50px; }
.col { display: flex; flex-direction: column; flex: none; margin-top: -2px; }
.col.tight { margin-top: -1.500px; }
.sort-a { width: 95px; }
.rec-a { width: 74px; }
.sm {
  height: 24px;
  display: flex;
  align-items: center;
  gap: 2px;
  white-space: nowrap;
  color: #444;
}
.tight .sm { height: 23.500px; }
.sm.off { color: #b0b0b0; }
.caret {
  display: inline-block;
  width: 0;
  height: 0;
  border-left: 3px solid transparent;
  border-right: 3px solid transparent;
  border-top: 3px solid #555;
  margin-left: 3px;
  flex: none;
}
.sm .caret { margin-left: 1px; }
.sm .caret.far { margin-left: 6px; }
.caret.dim { border-top-color: #c4c4c4; }
.g-clip .gbody { padding-left: 4px; }
.g-sort .gbody { padding-left: 2px; }
.g-rec .gbody { padding-left: 2px; }
.g-find .gbody { padding-left: 2px; }

.fmt-row { display: flex; align-items: center; height: 22px; }
.fmt-row.second { margin-top: 10px; }
.combo {
  height: 22px;
  box-sizing: border-box;
  border: 1px solid #c6c6c6;
  background: #fff;
  display: flex;
  align-items: center;
  padding-left: 3px;
  font-size: 12px;
  color: #333;
}
.combo .caret { margin-left: auto; margin-right: 4px; }
.combo.font { width: 139px; margin-left: 1px; }
.combo.size { width: 55px; margin-right: 1px; }
.size-val { color: #5a3a7a; }
.fi { margin: 0 3px; }
.fcaret { width: 10px; display: flex; justify-content: center; }
.fcaret .caret { margin: 0; }
.vsep { width: 1px; height: 20px; background: #c6c6c6; margin: 0 4px; flex: none; }
.vsep.wide { margin: 0 4px 0 6px; }
.collapse { position: absolute; right: 8px; bottom: 3px; }

/* main */
.main { flex: 1; display: flex; min-height: 0; background: #fff; }
.navpane {
  width: 215px;
  flex: none;
  box-sizing: border-box;
  border-right: 2px solid #c6c6c6;
  background: #fff;
}
.nav-head {
  height: 31px;
  display: flex;
  align-items: center;
  padding-left: 9px;
  gap: 5px;
}
.nav-title {
  width: 160px;
  margin-top: 3px;
  font-size: 21.300px;
  font-weight: 300;
  color: #a4373a;
  white-space: nowrap;
}
.nav-sec {
  height: 18px;
  display: flex;
  align-items: center;
  justify-content: space-between;
  padding: 0 15px 0 12px;
  font-weight: 700;
  font-size: 12px;
  color: #555;
}
.nav-item {
  height: 24px;
  margin: 0 3px;
  padding-left: 12px;
  display: flex;
  align-items: center;
  gap: 11px;
  font-size: 11px;
  color: #555;
  box-sizing: border-box;
}
.nav-item.active { background: #f9a9ab; border: 1px solid #fbc8c9; padding-left: 11px; }

.content { flex: 1; min-width: 0; display: flex; flex-direction: column; }
.doc-tabs {
  height: 24px;
  flex: none;
  display: flex;
  box-sizing: border-box;
  border-bottom: 1px solid #808080;
  background: #f3f2f1;
}
.doc-tab {
  width: 100px;
  height: 24px;
  box-sizing: border-box;
  border: 1px solid #b8b8b8;
  border-left: 0;
  border-top: 0;
  background: #fff;
  display: flex;
  align-items: center;
  padding-left: 5px;
  gap: 9px;
  font-size: 11px;
  color: #555;
}
.doc-tab:first-child { width: 101px; padding-left: 6px; }
.doc-tab.active { background: #f9b4b6; font-weight: 700; color: #444; }
.doc-x { margin-left: auto; margin-right: 5px; }

.sheet { flex: 1; min-height: 0; overflow: hidden; background: #fff; }
table {
  border-collapse: separate;
  border-spacing: 0;
  table-layout: fixed;
  width: 1174px;
  font-size: 12.800px;
  color: #333;
}
.c-sel { width: 19px; }
.c-std { width: 96px; }
.c-add { width: 99px; }
th, td {
  height: 20px;
  padding: 1px 0 0 3px;
  box-sizing: border-box;
  border-right: 1px solid #c5d0e2;
  border-bottom: 1px solid #c5d0e2;
  white-space: nowrap;
  overflow: hidden;
  text-align: left;
  line-height: 18px;
}
th {
  position: relative;
  background: #dee1e6;
  font-weight: 400;
  color: #444;
  border-right-color: #b9c3d4;
  border-bottom-color: #dee1e6;
  padding: 0 16px 1px 0;
  text-align: center;
}
th.hot { background: linear-gradient(#fde77e, #fed968); }
th.corner { background: linear-gradient(135deg, #dee1e6 50%, #eef0f3 50%, #dee1e6 85%); padding: 0; }
th.add { font-style: italic; text-align: left; padding: 0 0 1px 4px; }
th.blank { background: #f5f7fc; border-right-color: #eef0f6; border-bottom-color: #f5f7fc; }
.hcaret {
  position: absolute;
  right: 5px;
  top: 9px;
  width: 0;
  height: 0;
  border-left: 3px solid transparent;
  border-right: 3px solid transparent;
  border-top: 3px solid #444;
}
td.num { text-align: right; padding-left: 0; padding-right: 1px; }
td.sel { background: #dfe2e7; padding: 0; }
tr.alt td { background: #f2f2f2; }
tr.alt td.sel { background: #dfe2e7; }
tr.cur td { background: #a3cdf0; border-right-color: #a3cdf0; border-bottom-color: #c5d0e2; }
tr.cur td.sel { background: #fdd675; border-right-color: #c5d0e2; }
tr.cur td.id { background: #fff; box-shadow: inset 0 0 0 1px #f4a6a9; padding-right: 0; }
.mark { background: #000; color: #fff; display: inline-block; line-height: 17px; }
td.star { text-align: center; font-size: 11px; color: #444; }
td.blank, tr.alt td.blank, tr.cur td.blank {
  background: #fff;
  border-right-color: #eef0f6;
  border-bottom-color: #eef0f6;
}
tr.empty td.esel { background: #f5f7fc; }

/* record bar */
.recbar {
  height: 18px;
  flex: none;
  display: flex;
  align-items: center;
  box-sizing: border-box;
  border-top: 1px solid #b8b8b8;
  border-bottom: 1px solid #c6c6c6;
  background: linear-gradient(#f4f5f7 50%, #e7e8ea 50%);
  font-size: 11px;
  color: #555;
  padding-left: 6px;
}
.rec-label { width: 44px; flex: none; white-space: nowrap; }
.rb.prev { margin-left: 9px; }
.rec-input {
  width: 50px;
  height: 16px;
  margin-left: 4px;
  padding-left: 2px;
  box-sizing: border-box;
  background: #fff;
  color: #222;
  line-height: 15px;
}
.rb.next { margin-left: 7px; }
.rb.last { margin-left: 9px; }
.rb.newr { margin-left: 9px; }
.rec-sep { width: 1px; height: 16px; background: #c6c6c6; margin-left: 3px; }
.rb.nof { margin-left: 8px; }
.nofilter { margin-left: 2px; color: #b0b0b0; width: 50px; }
.rec-search {
  width: 69px;
  height: 16px;
  margin-left: 5px;
  padding-left: 2px;
  box-sizing: border-box;
  background: #fff;
  color: #222;
  line-height: 15px;
}

/* status bar */
.status {
  height: 21px;
  flex: none;
  display: flex;
  align-items: center;
  padding-left: 8px;
  padding-right: 1px;
  background: #f3f2f1;
  box-sizing: border-box;
  font-size: 11px;
  color: #555;
}
.numlock { margin-left: auto; margin-right: 19px; }
.sview { width: 40px; height: 21px; display: flex; align-items: center; justify-content: center; }
.sview.on { background: #c8c6c4; }

/* taskbar */
.taskbar {
  height: 40px;
  flex: none;
  display: flex;
  align-items: stretch;
  background: linear-gradient(90deg, #000, #05060d);
}
.start { width: 48px; display: flex; align-items: center; justify-content: center; }
.search {
  width: 344px;
  display: flex;
  align-items: center;
  background: #333;
  padding-left: 8px;
  box-sizing: border-box;
  color: #a8a8a8;
  font-size: 14.5px;
}
.search span { margin-left: 8px; }
.mic { margin-left: auto; margin-right: 15px; }
.apps { display: flex; }
.app-slot {
  width: 49.300px;
  display: flex;
  align-items: center;
  justify-content: center;
  position: relative;
}
.app-slot.run::after {
  content: "";
  position: absolute;
  left: 5px;
  right: 5px;
  bottom: 0;
  height: 2px;
  background: #76b9ed;
}
.app-slot.open { background: #333; }
.app-slot.open::after { left: 0; right: 0; }
.tray { flex: 1; position: relative; display: flex; align-items: center; padding-left: 250px; box-sizing: border-box; }
.t-cloud { margin-left: 10px; }
.t-power { margin-left: 9px; }
.t-wifi { margin-left: 9px; }
.t-vol { margin-left: 7px; }
.clock {
  width: 60px;
  margin-left: 7px;
  display: flex;
  flex-direction: column;
  align-items: center;
  gap: 3px;
  color: #e8e8e8;
  font-size: 11.5px;
  line-height: 16px;
}
.notif { position: relative; margin-left: 14px; }
.badge {
  position: absolute;
  left: 7px;
  top: 7px;
  width: 16px;
  height: 16px;
  border-radius: 50%;
  background: #333;
  border: 1px solid #999;
  box-sizing: border-box;
  color: #fff;
  font-size: 10px;
  line-height: 14px;
  text-align: center;
}
</style>
